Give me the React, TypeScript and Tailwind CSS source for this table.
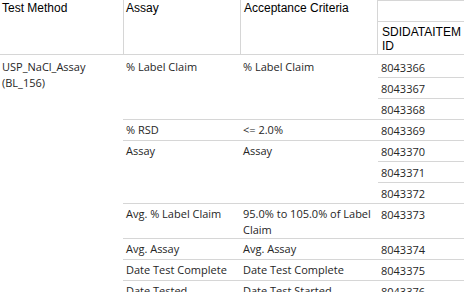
type Group = {
  assay: string;
  criteria: string;
  ids: string[];
};

const groups: Group[] = [
  { assay: "% Label Claim", criteria: "% Label Claim", ids: ["8043366", "8043367", "8043368"] },
  { assay: "% RSD", criteria: "<= 2.0%", ids: ["8043369"] },
  { assay: "Assay", criteria: "Assay", ids: ["8043370", "8043371", "8043372"] },
  { assay: "Avg. % Label Claim", criteria: "95.0% to 105.0% of Label Claim", ids: ["8043373"] },
  { assay: "Avg. Assay", criteria: "Avg. Assay", ids: ["8043374"] },
  { assay: "Date Test Complete", criteria: "Date Test Complete", ids: ["8043375"] },
  { assay: "Date Tested", criteria: "Date Test Started", ids: ["8043376"] },
  { assay: "Final Result", criteria: "Final Result", ids: ["8043377"] },
];

export default function App() {
  return (
    <div className="w-[464px] h-[292px] overflow-hidden bg-white">
      {/* header */}
      <div className="flex h-[55px] border-b border-[#d6d6d6] font-['Liberation_Sans',Arial,sans-serif] text-[12px] leading-[14px] text-black">
        <div className="w-[123px] shrink-0 pl-[2px] pt-[1px]">Test Method</div>
        <div className="w-[117px] shrink-0 border-l border-[#d6d6d6] pl-[2px] pt-[1px]">Assay</div>
        <div className="w-[137px] shrink-0 border-l border-[#d6d6d6] pl-[3px] pt-[1px]">
          Acceptance Criteria
        </div>
        <div className="flex min-w-0 flex-1 flex-col border-l border-[#d6d6d6]">
          <div className="h-[22px] border-y border-[#d6d6d6]" />
          <div className="pl-[4px] pr-[2px] pt-[3px]">SDIDATAITEM ID</div>
        </div>
      </div>

      {/* body */}
      <div className="flex pt-[2px] font-['Open_Sans','Noto_Sans',sans-serif] text-[11px] leading-[15px] text-[#262626]">
        <div className="w-[123px] shrink-0 pl-[2px] pt-[2px] leading-[16px]">
          USP_NaCl_Assay
          <br />
          (BL_156)
        </div>
        <div className="min-w-0 flex-1">
          {groups.map((g, i) => (
            <div
              key={g.ids[0]}
              className={`flex ${i > 0 ? "border-t border-[#d6d6d6]" : ""}`}
            >
              <div className="w-[117px] shrink-0 pl-[3px] pt-[2px] leading-[16px]">{g.assay}</div>
              <div className="w-[137px] shrink-0 pl-[3px] pr-[2px] pt-[2px] leading-[16px]">
                {g.criteria}
              </div>
              <div className="ml-px min-w-0 flex-1 divide-y divide-[#d6d6d6]">
                {g.ids.map((id) => (
                  <div key={id} className="pl-[3px] pt-[3px] pb-[2px]">
                    {id}
                  </div>
                ))}
              </div>
            </div>
          ))}
        </div>
      </div>
    </div>
  );
}
